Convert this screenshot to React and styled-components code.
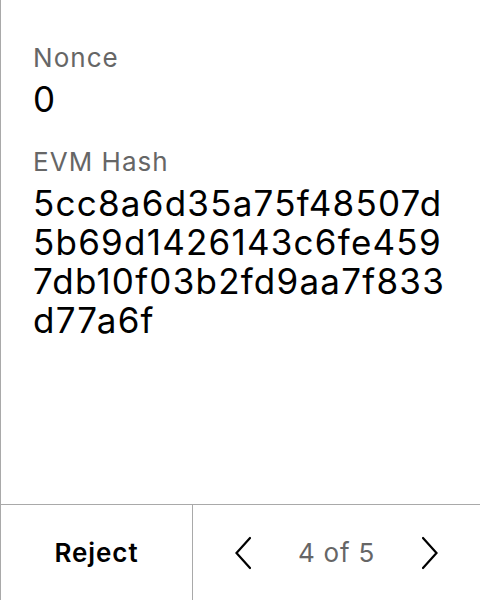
import React from 'react'
import styled, { createGlobalStyle } from 'styled-components'

const GlobalStyle = createGlobalStyle`
  html, body {
    margin: 0;
    padding: 0;
    background: #fff;
  }
  body {
    font-family: Inter, "Liberation Sans", sans-serif;
    color: #000;
  }
  * {
    box-sizing: border-box;
  }
`

const Screen = styled.div`
  width: 480px;
  height: 600px;
  display: flex;
  flex-direction: column;
  border-left: 1px solid #a9a9a9;
  background: #fff;
`

const Details = styled.div`
  flex: 1;
  display: flex;
  flex-direction: column;
  gap: 28px;
  padding: 43px 20px 0 32px;
`

const Field = styled.div`
  display: flex;
  flex-direction: column;
  gap: 7px;
`

const Label = styled.div`
  font-size: 26px;
  line-height: 30px;
  letter-spacing: 0.04em;
  color: #666;
`

const Value = styled.div`
  font-size: 35px;
  line-height: 39px;
  letter-spacing: 0.035em;
  color: #000;
`

const Footer = styled.div`
  height: 96px;
  display: grid;
  grid-template-columns: 192px 1fr;
  border-top: 1px solid #a9a9a9;
`

const RejectButton = styled.button`
  border: none;
  border-right: 1px solid #a9a9a9;
  background: transparent;
  font-family: inherit;
  font-size: 26px;
  font-weight: 600;
  letter-spacing: 0.035em;
  color: #000;
  cursor: pointer;
  padding: 0;
`

const Pager = styled.div`
  display: flex;
  align-items: center;
  justify-content: center;
  gap: 47px;
`

const ArrowButton = styled.button`
  border: none;
  background: transparent;
  padding: 0;
  display: flex;
  cursor: pointer;
`

const PageCount = styled.span`
  font-size: 26px;
  letter-spacing: 0.03em;
  color: #666;
`

const Chevron = ({ dir }) => (
  <svg width="16" height="34" viewBox="0 0 16 34">
    <polyline
      points={dir === 'left' ? '15,2 1.5,17 15,32' : '1,2 14.5,17 1,32'}
      fill="none"
      stroke="#000"
      strokeWidth="2.2"
      strokeLinecap="round"
    />
  </svg>
)

const hash = '5cc8a6d35a75f48507d5b69d1426143c6fe4597db10f03b2fd9aa7f833d77a6f'
const hashLines = [hash.slice(0, 19), hash.slice(19, 38), hash.slice(38, 58), hash.slice(58)]

const App = () => (
  <>
    <GlobalStyle />
    <Screen>
      <Details>
        <Field>
          <Label>Nonce</Label>
          <Value>0</Value>
        </Field>
        <Field>
          <Label>EVM Hash</Label>
          <Value>
            {hashLines.map((l) => (
              <div key={l}>{l}</div>
            ))}
          </Value>
        </Field>
      </Details>
      <Footer>
        <RejectButton>Reject</RejectButton>
        <Pager>
          <ArrowButton>
            <Chevron dir="left" />
          </ArrowButton>
          <PageCount>4 of 5</PageCount>
          <ArrowButton>
            <Chevron dir="right" />
          </ArrowButton>
        </Pager>
      </Footer>
    </Screen>
  </>
)

export default App
